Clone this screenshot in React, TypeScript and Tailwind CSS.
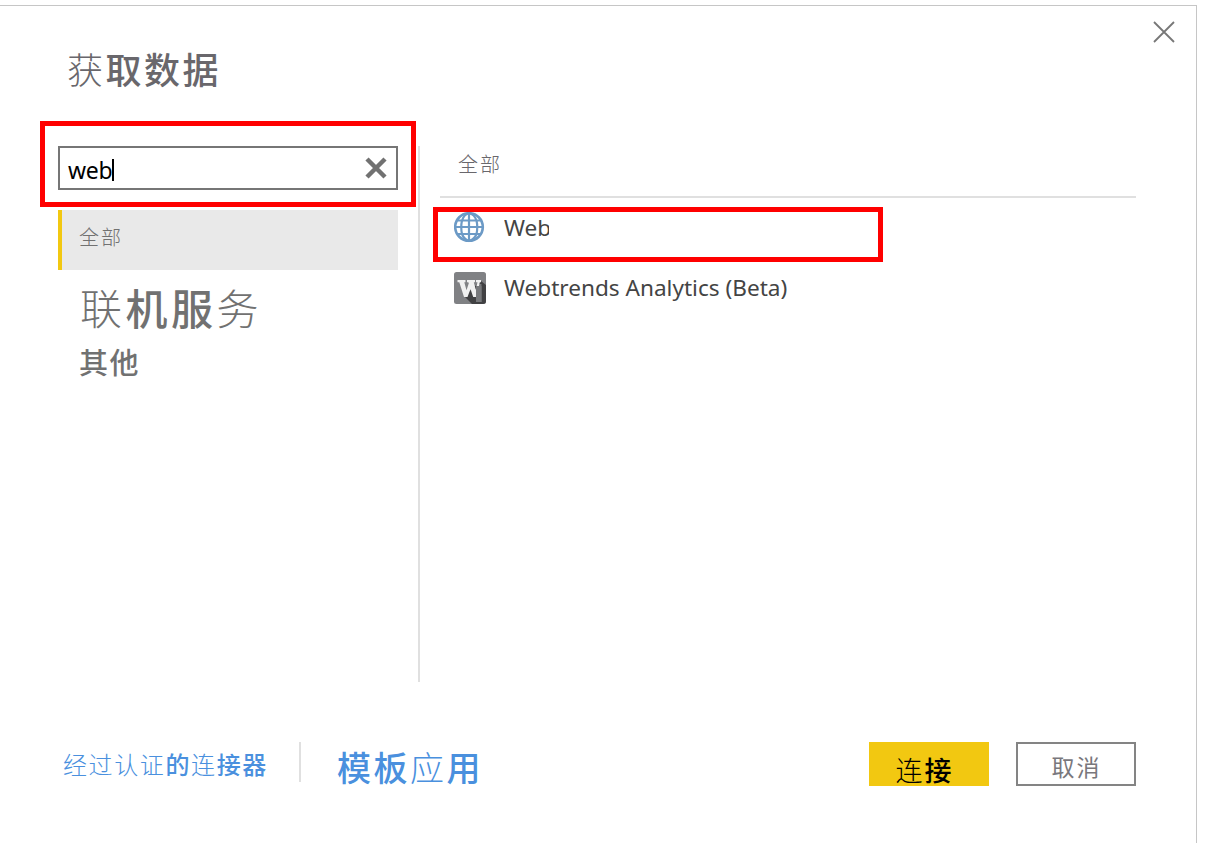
import React from 'react';

type Part = { text: string; light?: boolean };

function Label({ parts, className, strong = 'font-medium' }: { parts: Part[]; className: string; strong?: string }) {
  return (
    <span className={`block whitespace-nowrap font-['Noto_Sans_CJK_SC',sans-serif] leading-none ${className}`}>
      {parts.map((p, i) => (
        <span key={i} className={p.light ? 'font-light' : strong}>
          {p.text}
        </span>
      ))}
    </span>
  );
}

function GlobeIcon() {
  return (
    <svg width="32" height="32" viewBox="0 0 32 32" fill="none" stroke="#6c9ac6" strokeWidth="2.2">
      <circle cx="15" cy="15" r="13.800" strokeWidth="2.600" />
      <path d="M15 1v28M1 15h28" />
      <path d="M8 8.500h14.500q1.500 6.500 0 13.500H8q-1.500-7 0-13.500M8 8.500q2-6 7-7.500Q20.500 2.500 22.500 8.500M8 22q2 5.500 7 7 5.500-1.500 7.500-7M3.500 8.500H8M22.500 8.500h4M3.500 22H8M22.500 22h4" />
    </svg>
  );
}

function WebtrendsIcon() {
  return (
    <svg width="32" height="32" viewBox="0 0 32 32">
      <rect width="32" height="32" rx="2.500" fill="#808184" />
      <path d="M27 9l5 4v16a3 3 0 0 1-3 3H18l-8-8z" fill="#414143" />
      <path d="M22 12h5.500v18H22z" fill="#77787b" />
      <path d="M3.500 8h8v2.300H10.300l2.200 8 2.300-7-.5-1H13V8h8v2.300h-1.200l2 7.500 1.700-7.500H22V8h5v2.300h-1.200L22.500 25h-3.300L16.500 17l-3 8H10L5.300 10.300H3.500z" fill="#f0f0f0" />
      <path d="M22 14h5.500v16H22z" fill="#77787b" />
    </svg>
  );
}

export default function App() {
  return (
    <div className="h-[843px] w-[1206px] overflow-hidden bg-white pt-[5px]">
      <main className="relative flex h-[838px] w-[1197px] flex-col border-t border-r border-[#c6c6c6]">
        <header className="flex h-[140px] shrink-0 items-start justify-between pt-[15px] pr-[21px] pl-[67px]">
          <h1 className="pt-[29px]">
            <Label className="text-[36px] tracking-[2.500px] text-[#69676c]" parts={[{ text: '获', light: true }, { text: '取数据' }]} />
          </h1>
          <button aria-label="关闭">
            <svg width="22" height="22" viewBox="0 0 22 22" stroke="#777" strokeWidth="1.800">
              <path d="M1 1l20 20M21 1L1 21" />
            </svg>
          </button>
        </header>

        <section className="flex h-[536px] shrink-0 pl-[58px]">
          <nav className="w-[360px] shrink-0">
            <div className="flex h-[44px] w-[340px] items-center justify-between border-2 border-[#767676] pr-[9px] pl-2">
              <div className="flex items-center pt-[4px] font-['Noto_Sans',sans-serif] text-[23px] leading-none text-black">
                <span className="tracking-[-0.3px]">web</span>
                <span className="h-[22px] w-[2px] bg-black" />
              </div>
              <svg width="22" height="22" viewBox="0 0 22 22" stroke="#717171" strokeWidth="4.500">
                <path d="M2 2l18 18M20 2L2 20" />
              </svg>
            </div>
            <div className="mt-[20px] h-[60px] w-[340px] border-l-4 border-[#f2c811] bg-[#e9e9e9] pt-[17px] pl-[17px]">
              <Label className="text-[20px] tracking-[2px] text-[#717171]" parts={[{ text: '全部', light: true }]} />
            </div>
            <Label className="mt-[16px] pl-[22px] text-[42px] tracking-[3.500px] text-[#717171]" parts={[{ text: '联', light: true }, { text: '机服' }, { text: '务', light: true }]} />
            <Label className="mt-[19px] pl-[21px] text-[29px] tracking-[1.500px] text-[#717171]" parts={[{ text: '其他' }]} />
          </nav>
          <div className="w-[2px] shrink-0 bg-[#e0e0e0]" />
          <div className="ml-[20px] w-[696px]">
            <div className="h-[52px] border-b-2 border-[#e0e0e0] pt-[8px] pl-[18px]">
              <Label className="text-[20px] tracking-[2px] text-[#69676c]" parts={[{ text: '全部', light: true }]} />
            </div>
            <ul className="pl-[14px] font-['Noto_Sans',sans-serif] text-[22.600px] text-[#444]">
              <li className="flex h-[60px] items-center gap-[18px]">
                <GlobeIcon />
                <span className="w-[45px] overflow-hidden whitespace-nowrap">Web</span>
              </li>
              <li className="flex h-[60px] items-center gap-[18px]">
                <WebtrendsIcon />
                <span className="whitespace-nowrap">Webtrends Analytics (Beta)</span>
              </li>
            </ul>
          </div>
        </section>

        <footer className="flex h-[104px] items-start pt-[60px] pl-[63px]">
          <a className="w-[236px] pt-[10px]">
            <Label className="text-[24px] tracking-[1.600px] text-[#4a90de]" parts={[{ text: '经过认证', light: true }, { text: '的' }, { text: '连', light: true }, { text: '接器' }]} />
          </a>
          <div className="h-[40px] w-[2px] bg-[#e0e0e0]" />
          <a className="w-[568px] pt-[8px] pl-[36px]">
            <Label className="text-[34px] tracking-[2.500px] text-[#4a90de]" parts={[{ text: '模板' }, { text: '应', light: true }, { text: '用' }]} />
          </a>
          <button className="flex h-[44px] w-[120px] justify-center bg-[#f2c811] pt-[14px]">
            <Label className="pr-[9px] text-[27px] tracking-[2px] text-black" parts={[{ text: '连', light: true }, { text: '接' }]} />
          </button>
          <button className="ml-[27px] flex h-[44px] w-[120px] justify-center border-2 border-[#848484] pt-[11px]">
            <Label strong="font-normal" className="pl-px text-[23px] tracking-[2px] text-[#79777c]" parts={[{ text: '取消' }]} />
          </button>
        </footer>

        <div className="pointer-events-none absolute top-[115px] left-[40px] h-[86px] w-[376px] border-[5px] border-[#ff0000]" />
        <div className="pointer-events-none absolute top-[201px] left-[433px] h-[55px] w-[450px] border-[5px] border-[#ff0000]" />
      </main>
    </div>
  );
}
